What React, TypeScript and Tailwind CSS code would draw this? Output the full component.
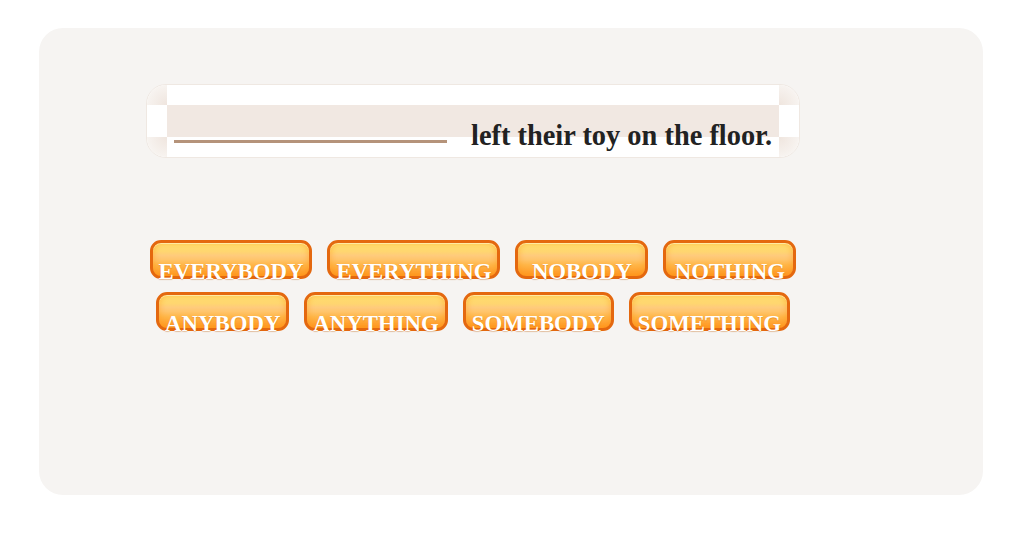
const words = [
  "EVERYBODY",
  "EVERYTHING",
  "NOBODY",
  "NOTHING",
  "ANYBODY",
  "ANYTHING",
  "SOMEBODY",
  "SOMETHING",
];

function WordButton({ label }: { label: string }) {
  return (
    <button className="flex h-[39px] min-w-[133px] items-end justify-center rounded-[11px] border-[3px] border-[#e4680f] bg-[linear-gradient(180deg,#ffdc6c_0%,#ffd670_26%,#ffcb7c_38%,#ffc56c_50%,#ffb648_66%,#ffa432_84%,#ff9720_100%)] px-[6px] shadow-[inset_0_1px_0_rgba(255,240,180,0.8),inset_3px_0_4px_rgba(255,150,20,0.25),inset_-3px_0_4px_rgba(255,150,20,0.25)]">
      <span className="mb-[-7px] whitespace-nowrap font-['Liberation_Serif',serif] text-[22.8px] font-bold leading-[22px] text-white [text-shadow:0_1px_1px_rgba(190,90,0,0.35)]">
        {label}
      </span>
    </button>
  );
}

function SentenceBox() {
  return (
    <div className="relative h-[74px] w-[654px] overflow-hidden rounded-[20px] border border-[#efe8e2] bg-white">
      <div className="grid h-full grid-cols-[20px_1fr_20px] grid-rows-[20px_32px_20px]">
        <div className="bg-[radial-gradient(circle_at_100%_100%,#efe5de_0%,#f6f1ed_60%,#fbfaf9_100%)]" />
        <div className="bg-white" />
        <div className="bg-[radial-gradient(circle_at_0%_100%,#efe5de_0%,#f6f1ed_60%,#fbfaf9_100%)]" />
        <div className="bg-white" />
        <div className="bg-[#f1e8e2]" />
        <div className="bg-white" />
        <div className="bg-[radial-gradient(circle_at_100%_0%,#efe5de_0%,#f6f1ed_60%,#fbfaf9_100%)]" />
        <div className="bg-white" />
        <div className="bg-[radial-gradient(circle_at_0%_0%,#efe5de_0%,#f6f1ed_60%,#fbfaf9_100%)]" />
      </div>
      <div className="absolute left-0 top-[37px] flex items-end pl-[27px]">
        <div className="mb-[7px] h-[3px] w-[273px] bg-[#b5937a]" />
        <span className="ml-[24px] whitespace-nowrap font-['Liberation_Serif',serif] text-[28.4px] font-bold leading-[28px] text-[#222]">
          left their toy on the floor.
        </span>
      </div>
    </div>
  );
}

export default function App() {
  return (
    <div className="min-h-[546px] w-full bg-white px-[39px] pt-[28px]">
      <div className="h-[467px] rounded-[24px] bg-[#f6f4f2] pl-[107px] pt-[56px]">
        <div className="w-[654px]">
          <SentenceBox />
          <div className="mt-[82px] flex flex-wrap justify-center gap-x-[15px] gap-y-[13px]">
            {words.map((w) => (
              <WordButton key={w} label={w} />
            ))}
          </div>
        </div>
      </div>
    </div>
  );
}
